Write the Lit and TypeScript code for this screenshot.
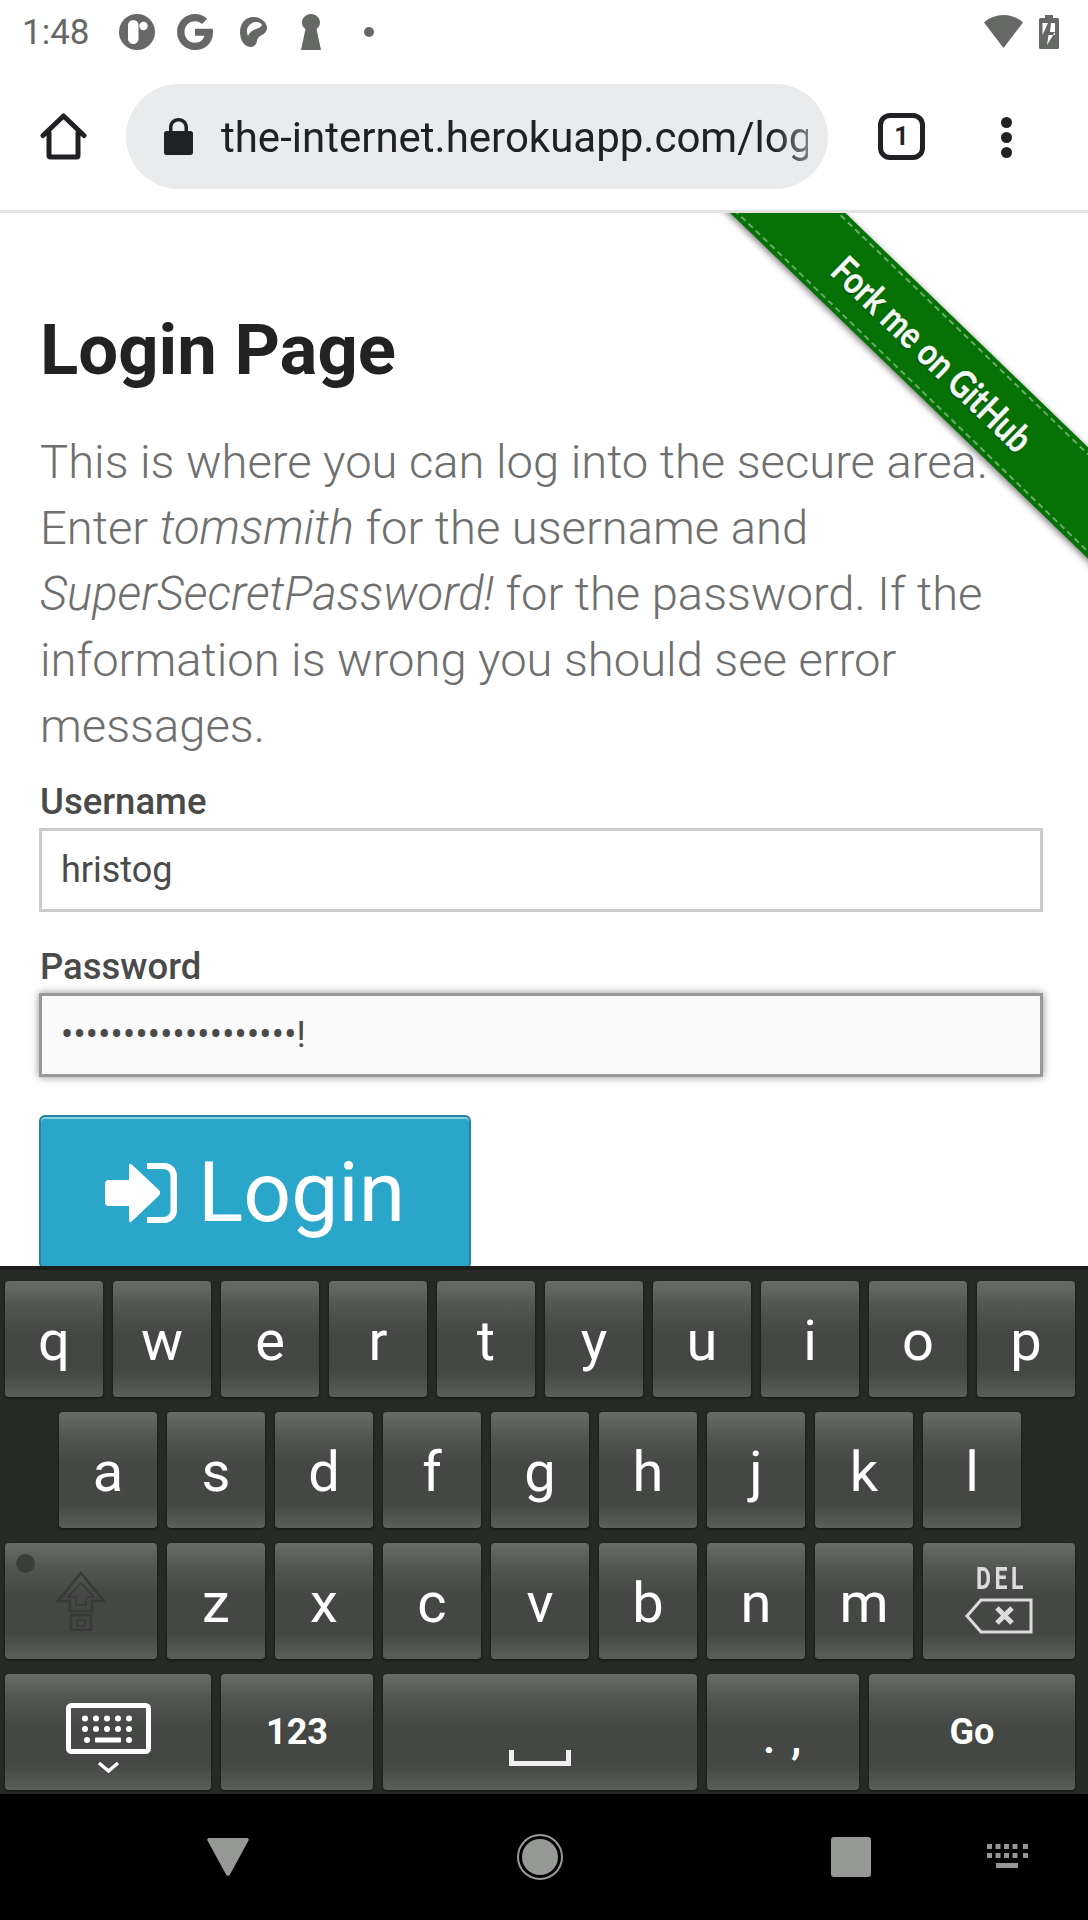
import { LitElement, html, css, svg } from "lit";
import { customElement } from "lit/decorators.js";

const ROWS = [
  ["q", "w", "e", "r", "t", "y", "u", "i", "o", "p"],
  ["a", "s", "d", "f", "g", "h", "j", "k", "l"],
];
const ROW3 = ["z", "x", "c", "v", "b", "n", "m"];

const dots = (xs: number[], y: number, r: number) =>
  xs.map((x) => svg`<circle cx=${x} cy=${y} r=${r}></circle>`);

@customElement("app-root")
export class AppRoot extends LitElement {
  static styles = css`
    :host {
      display: block;
      width: 1088px;
      height: 1920px;
      overflow: hidden;
      background: #fff;
      font-family: Roboto, "Liberation Sans", sans-serif;
    }
    svg {
      display: block;
      flex: none;
    }

    .status {
      height: 66px;
      display: flex;
      align-items: center;
      color: #666866;
      fill: #666866;
    }
    .time {
      margin-left: 22px;
      width: 97px;
      font-size: 35px;
      line-height: 66px;
    }
    .status .spacer {
      flex: 1;
    }

    .toolbar {
      height: 147px;
      box-sizing: border-box;
      border-bottom: 3px solid #e3e4e2;
      padding: 18px 0 0 40px;
      display: flex;
      align-items: flex-start;
    }
    .home {
      margin-top: 29px;
    }
    .pill {
      margin-left: 39px;
      width: 702px;
      height: 105px;
      border-radius: 53px;
      background: #e9ebec;
      display: flex;
      align-items: center;
      box-sizing: border-box;
      padding-left: 38px;
    }
    .url {
      margin: 3px 0 0 28px;
      width: 587px;
      overflow: hidden;
      white-space: nowrap;
      font-size: 42px;
      line-height: 60px;
      color: #202124;
      -webkit-mask-image: linear-gradient(90deg, #000 94%, rgba(0, 0, 0, 0.55));
      mask-image: linear-gradient(90deg, #000 94%, rgba(0, 0, 0, 0.55));
    }
    .tabs {
      margin: 29px 0 0 50px;
      width: 47px;
      height: 47px;
      box-sizing: border-box;
      border: 5px solid #202124;
      border-radius: 12px;
      display: flex;
      align-items: center;
      justify-content: center;
      font-size: 25px;
      font-weight: 700;
      color: #202124;
    }
    .more {
      margin: 33px 0 0 76px;
    }

    .page {
      position: relative;
      height: 1053px;
      overflow: hidden;
      padding: 0 45px 0 40px;
      box-sizing: border-box;
    }
    h1 {
      margin: 0;
      padding-top: 99px;
      font-size: 70.7px;
      line-height: 76px;
      font-weight: 700;
      color: #222;
    }
    p {
      margin: 41px 0 0;
      font-size: 47.15px;
      line-height: 66px;
      font-weight: 300;
      color: #6f6f6f;
    }
    label {
      display: block;
      font-size: 36.5px;
      line-height: 40px;
      font-weight: 500;
      color: #4a4a4a;
    }
    .first {
      margin-top: 22.5px;
    }
    .second {
      margin-top: 35px;
    }
    .input {
      margin: 6px 0 0 -1px;
      height: 84px;
      box-sizing: border-box;
      border: 3px solid #ccc;
      background: #fff;
      padding-left: 19px;
      display: flex;
      align-items: center;
      font-size: 36px;
      color: #4a4a4a;
    }
    .input.focus {
      border-color: #999;
      background: #fafafa;
      box-shadow: 0 0 8px rgba(0, 0, 0, 0.45);
    }
    .pw {
      font-size: 36px;
      letter-spacing: 0.25px;
    }
    .login {
      margin: 38px 0 0 -1px;
      width: 432px;
      height: 154px;
      box-sizing: border-box;
      border: 2px solid #2284a1;
      border-radius: 6px;
      background: #2ba6cb;
      box-shadow: inset 0 2px 0 rgba(255, 255, 255, 0.45);
      color: #fff;
      display: flex;
      align-items: center;
      padding: 2px 0 0 64px;
      gap: 21px;
      font-size: 84px;
    }

    .ribbon {
      position: absolute;
      left: 658px;
      top: 105px;
      width: 560px;
      height: 80px;
      transform: rotate(44deg);
      background: #067206;
      box-shadow: 0 2px 7px rgba(0, 0, 0, 0.55);
      color: #f2f8f2;
      font-family: Lato, sans-serif;
      font-weight: 700;
      font-size: 38px;
      text-align: center;
      line-height: 80px;
    }
    .ribbon::before {
      content: "";
      position: absolute;
      inset: 4px 0;
      border-top: 2px dashed rgba(255, 255, 255, 0.4);
      border-bottom: 2px dashed rgba(255, 255, 255, 0.4);
    }
    .ribbon span {
      display: inline-block;
      transform: translateX(-7px) scaleX(0.81);
      -webkit-text-stroke: 0.4px #f2f8f2;
      text-shadow: 0 1px 2px rgba(0, 0, 0, 0.6);
    }

    .keyboard {
      height: 528px;
      box-sizing: border-box;
      background: #272a27;
      border-top: 4px solid #1b1e1b;
      padding: 11px 0 0 5px;
      display: grid;
      grid-template-columns: repeat(20, 44px);
      grid-auto-rows: 116px;
      gap: 15px 10px;
    }
    .key {
      position: relative;
      grid-column: span 2;
      border-radius: 4px;
      background: linear-gradient(
        180deg,
        #696b69 0%,
        #535553 22%,
        #454745 45%,
        #454745 78%,
        #5c5e5c 100%
      );
      box-shadow: 0 1px 3px rgba(0, 0, 0, 0.6);
      display: flex;
      flex-direction: column;
      align-items: center;
      justify-content: center;
      color: #fff;
      font-size: 56px;
      padding-top: 3px;
      box-sizing: border-box;
    }
    .indent {
      grid-column: 2 / span 2;
    }
    .w3 {
      grid-column: span 3;
    }
    .w4 {
      grid-column: span 4;
    }
    .w6 {
      grid-column: span 6;
    }
    .small {
      font-size: 36px;
      font-weight: 700;
      padding-top: 0;
    }
    .punct {
      font-size: 46px;
      font-weight: 500;
      padding: 10px 0 0;
      letter-spacing: 2px;
    }
    .space {
      padding: 52px 0 0;
    }
    .sticky {
      position: absolute;
      left: 11px;
      top: 11px;
      width: 19px;
      height: 19px;
      border-radius: 50%;
      background: #3b3d3b;
    }
    .del {
      display: block;
      font-size: 32px;
      line-height: 28px;
      font-weight: 700;
      letter-spacing: 5px;
      color: #dcdcdc;
      margin: 0 0 6px 6px;
      transform: scaleX(0.72);
    }
    .delkey {
      padding: 0 0 4px;
    }

    .nav {
      height: 126px;
      background: #000;
      display: flex;
      align-items: center;
      padding-left: 207px;
    }
    .nav .circle {
      margin-left: 268px;
    }
    .nav .square {
      margin-left: 268px;
      width: 40px;
      height: 40px;
      border-radius: 3px;
      background: #969896;
    }
    .nav .kbd {
      margin-left: 116px;
    }
  `;

  render() {
    return html`
      ${this.statusBar()} ${this.toolbar()}
      <main class="page">
        <h1>Login Page</h1>
        <p>
          This is where you can log into the secure area. Enter
          <em>tomsmith</em> for the username and
          <em>SuperSecretPassword!</em> for the password. If the information is
          wrong you should see error messages.
        </p>
        <label class="first">Username</label>
        <div class="input">hristog</div>
        <label class="second">Password</label>
        <div class="input focus"><span class="pw">•••••••••••••••••••!</span></div>
        <div class="login">
          <svg width="72" height="60" viewBox="0 0 72 60" fill="#fff">
            <path
              d="M24 2.5c0-1.5 1.6-2.2 2.7-1.1L54 27c1.5 1.5 1.5 4 0 5.5L26.7 58.6c-1.1 1.1-2.7.4-2.7-1.1V43H3.5C1.5 43 0 41.5 0 39.5v-19C0 18.5 1.5 17 3.5 17H24z"
            ></path>
            <path
              d="M42 0h17c7.5 0 13 5.5 13 13v34c0 7.5-5.5 13-13 13H42v-6h16c4.5 0 7.5-3 7.5-7.5v-33C65.5 9 62.5 6 58 6H42z"
            ></path>
          </svg>
          <span>Login</span>
        </div>
        <div class="ribbon"><span>Fork me on GitHub</span></div>
      </main>
      ${this.keyboard()}
      <div class="nav">
        <svg width="42" height="38" viewBox="0 0 42 38" fill="#969896">
          <path d="M2 0h38c1.5 0 2.2 1.2 1.5 2.5L23 36.5c-1 1.7-3 1.7-4 0L.5 2.5C-.2 1.2.5 0 2 0z"></path>
        </svg>
        <svg class="circle" width="46" height="46" viewBox="0 0 46 46">
          <circle cx="23" cy="23" r="22" fill="none" stroke="#969896" stroke-width="2"></circle>
          <circle cx="23" cy="23" r="18" fill="#969896"></circle>
        </svg>
        <div class="square"></div>
        <svg class="kbd" width="41" height="26" viewBox="0 0 41 26" fill="#969896">
          ${[0, 8.5, 17, 25.5, 36].map(
            (x) => svg`<rect x=${x} y="0" width="5" height="5"></rect><rect x=${x} y="9" width="5" height="5"></rect>`
          )}
          <rect x="9" y="19" width="22" height="5"></rect>
        </svg>
      </div>
    `;
  }

  statusBar() {
    return html`
      <div class="status">
        <span class="time">1:48</span>
        <svg width="36" height="36" viewBox="0 0 36 36" style="margin-top:-3px">
          <circle cx="18" cy="18" r="18"></circle>
          <rect x="9" y="6" width="10.5" height="24" rx="5.2" fill="#fff"></rect>
          <circle cx="24.5" cy="12" r="4.2" fill="#fff"></circle>
        </svg>
        <svg width="36" height="36" viewBox="0 0 36 36" style="margin:-3px 0 0 22px">
          <path
            d="M18 0c4.8 0 9 1.8 12.2 4.8L25 10c-1.8-1.7-4.2-2.8-7-2.8-5.8 0-10.5 4.7-10.5 10.8S12.2 28.8 18 28.8c5 0 8.4-2.8 9.4-7H18v-7h17.6c.3 1.2.4 2.4.4 3.7C36 28.8 28.8 36 18 36 8 36 0 28 0 18S8 0 18 0z"
          ></path>
        </svg>
        <svg width="27" height="30" viewBox="0 0 27 30" style="margin:-3px 0 0 27px">
          <path
            d="M13 0c7.5 0 14 5 14 11 0 3-2 5.5-6 7.5-2.5 1.3-3.5 3-4 5.5-.7 3.5-2.7 6-6 6C5 30 0 24 0 15 0 6.5 5.5 0 13 0zm9 8c-1-2.5-5-3.5-8.5-2.5C9 7 6.5 11 7 15c.2 1.5.5 3 1 4 1.5-4 5-6 8-7 3-1 5-2 6-4z"
            fill-rule="evenodd"
          ></path>
        </svg>
        <svg width="20" height="36" viewBox="0 0 20 36" style="margin:-3px 0 0 34px">
          <path d="M10 0c5 0 9 3.8 9 8.5 0 2.7-1.4 5-3.5 6.6L20 36H0l4.500-20.900C2.400 13.500 1 11.200 1 8.500 1 3.800 5 0 10 0z"></path>
        </svg>
        <svg width="10" height="10" viewBox="0 0 10 10" style="margin:-3px 0 0 43px">
          <circle cx="5" cy="5" r="5"></circle>
        </svg>
        <span class="spacer"></span>
        <svg width="39" height="33" viewBox="0 0 39 33" style="margin-top:-3px">
          <path d="M19.5 0C27 0 33.8 2.8 39 7.5L19.5 33 0 7.5C5.2 2.8 12 0 19.5 0z"></path>
        </svg>
        <svg width="20" height="34" viewBox="0 0 20 34" style="margin:-3px 29px 0 16px">
          <path
            fill-rule="evenodd"
            d="M6 0h8v3h4.5c.8 0 1.5.7 1.5 1.5v28c0 .8-.7 1.5-1.5 1.5h-17C.7 34 0 33.300 0 32.500v-28C0 3.700.7 3 1.500 3H6zM3.500 8v12L9 8zM12 8l-1 9h5L8 30l1.500-10H16V8z"
          ></path>
          <path d="M13 9v6h2V9z" fill="#fff"></path>
        </svg>
      </div>
    `;
  }

  toolbar() {
    return html`
      <div class="toolbar">
        <svg class="home" width="47" height="47" viewBox="0 0 47 47" fill="none" stroke="#202124" stroke-width="5" stroke-linejoin="round" stroke-linecap="round">
          <path d="M3 22.5L23.5 3 44 22.5M9 20v22.5c0 1 .6 1.5 1.5 1.5h26c1 0 1.5-.5 1.5-1.5V20"></path>
        </svg>
        <div class="pill">
          <svg width="29" height="37" viewBox="0 0 29 37">
            <path
              fill="#202124"
              d="M14.5 0C20 0 24 4 24 9.5V13h2.5c1.5 0 2.5 1 2.5 2.5v19c0 1.5-1 2.5-2.5 2.5h-24C1 37 0 36 0 34.5v-19C0 14 1 13 2.5 13H5V9.5C5 4 9 0 14.5 0zm0 3.5C11 3.5 8.5 6 8.5 9.5V13h12V9.5c0-3.5-2.500-6-6-6z"
            ></path>
          </svg>
          <div class="url">the-internet.herokuapp.com/login</div>
        </div>
        <div class="tabs">1</div>
        <svg class="more" width="11" height="41" viewBox="0 0 11 41" fill="#202124">
          ${dots([5.5], 5.5, 5.5)} ${dots([5.5], 20.5, 5.5)} ${dots([5.5], 35.5, 5.5)}
        </svg>
      </div>
    `;
  }

  keyboard() {
    return html`
      <div class="keyboard">
        ${ROWS[0].map((k) => html`<div class="key">${k}</div>`)}
        ${ROWS[1].map((k, i) => html`<div class="key ${i === 0 ? "indent" : ""}">${k}</div>`)}
        <div class="key w3" style="padding:0">
          <span class="sticky"></span>
          <svg width="50" height="60" viewBox="0 0 50 60" fill="none" stroke="#383a38" stroke-width="2.5">
            <path d="M25 2L48 30H36V40H14V30H2z"></path>
            <path d="M25 12L38 26H30V34H20V26H12z" stroke-width="1.5"></path>
            <rect x="15" y="44" width="20" height="15"></rect>
            <rect x="21" y="49" width="8" height="6" stroke-width="1.5"></rect>
          </svg>
        </div>
        ${ROW3.map((k) => html`<div class="key">${k}</div>`)}
        <div class="key w3 delkey">
          <span class="del">DEL</span>
          <svg width="68" height="36" viewBox="0 0 68 36" fill="none" stroke="#dcdcdc">
            <path d="M66 2H16L2 18l14 16h50z" stroke-width="3"></path>
            <path d="M32 10l15 15M47 10L32 25" stroke-width="5"></path>
          </svg>
        </div>
        <div class="key w4" style="padding:13px 0 0">
          <svg width="85" height="72" viewBox="0 0 85 72" fill="none" stroke="#fff">
            <rect x="2.5" y="2.5" width="80" height="46" rx="3" stroke-width="5"></rect>
            <g fill="#fff" stroke="none">
              ${[19, 30, 41, 52, 63].map(
                (x) => svg`<circle cx=${x} cy="15.5" r="3"></circle><circle cx=${x} cy="26" r="3"></circle>`
              )}
              <circle cx="21" cy="37" r="3"></circle>
              <circle cx="63" cy="37" r="3"></circle>
              <rect x="29" y="34.5" width="26" height="5" rx="1"></rect>
            </g>
            <path d="M33 60l9.5 8 9.5-8" stroke-width="3.5"></path>
          </svg>
        </div>
        <div class="key w3 small">123</div>
        <div class="key w6 space">
          <svg width="62" height="16" viewBox="0 0 62 16" fill="none" stroke="#f0f0f0" stroke-width="5">
            <path d="M2.5 0v13.5h57V0"></path>
          </svg>
        </div>
        <div class="key w3 punct">. ,</div>
        <div class="key w4 small">Go</div>
      </div>
    `;
  }
}
